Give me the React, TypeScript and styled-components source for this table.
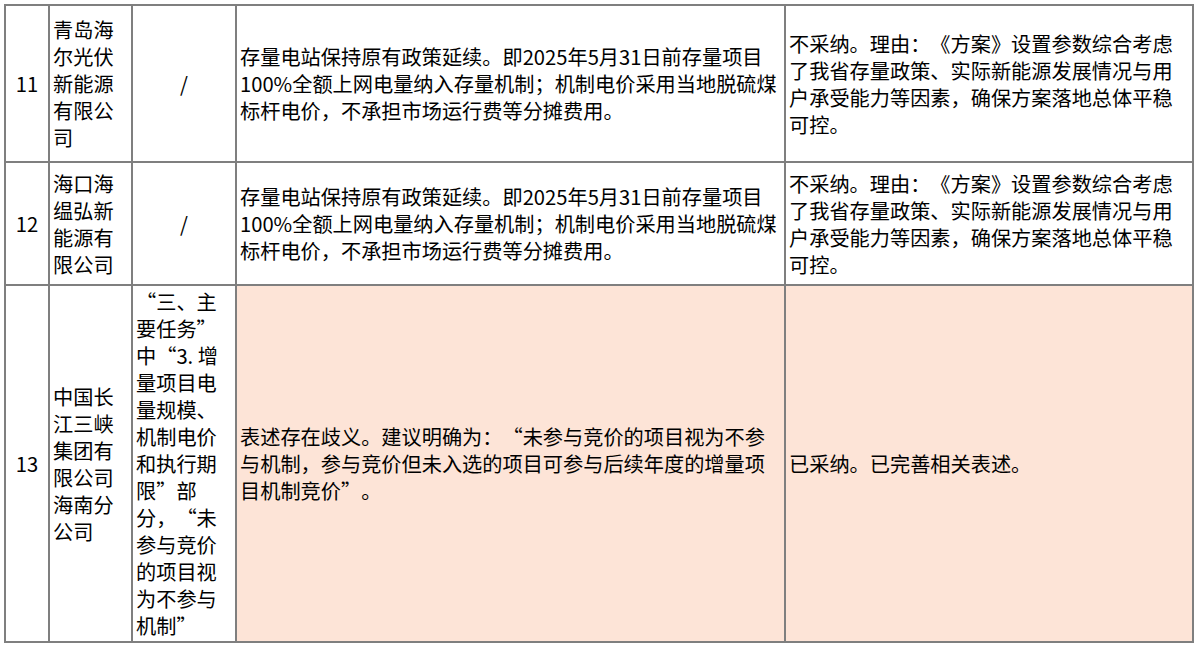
import styled, { createGlobalStyle } from "styled-components";

const GlobalStyle = createGlobalStyle`
  body {
    margin: 0;
    background: #ffffff;
    font-family: "Noto Sans CJK SC", "Noto Sans", sans-serif;
  }
`;

export const Page = styled.div`
  padding: 4px 0 0 4px;
`;

export const Table = styled.table`
  border-collapse: collapse;
  table-layout: fixed;
  width: 1188px;
  color: #000000;
  font-size: 20.2px;
  line-height: 27px;
  text-spacing-trim: space-all;
`;

export const Col = styled.col<{ $w: number }>`
  width: ${(p) => p.$w}px;
`;

export const Row = styled.tr<{ $h: number }>`
  height: ${(p) => p.$h}px;
`;

export const Cell = styled.td<{ $align?: string; $fill?: boolean }>`
  border: 2px solid #7f7f7f;
  padding: 1px 3px;
  vertical-align: middle;
  text-align: ${(p) => p.$align || "left"};
  background: ${(p) => (p.$fill ? "#fde4d7" : "#ffffff")};
`;

type Item = {
  no: string;
  unit: string;
  clause: string;
  clauseAlign: string;
  advice: string;
  reply: string;
  height: number;
  fill?: boolean;
};

const widths = [44, 83, 104, 549, 408];

// zero-width spaces give the browser a break point next to the curly quotes
const zw = "\u200B";

const rows: Item[] = [
  {
    no: "11",
    unit: "青岛海尔光伏新能源有限公司",
    clause: "/",
    clauseAlign: "center",
    advice:
      "存量电站保持原有政策延续。即2025年5月31日前存量项目100%全额上网电量纳入存量机制；机制电价采用当地脱硫煤标杆电价，不承担市场运行费等分摊费用。",
    reply:
      "不采纳。理由：《方案》设置参数综合考虑了我省存量政策、实际新能源发展情况与用户承受能力等因素，确保方案落地总体平稳可控。",
    height: 157,
  },
  {
    no: "12",
    unit: "海口海缊弘新能源有限公司",
    clause: "/",
    clauseAlign: "center",
    advice:
      "存量电站保持原有政策延续。即2025年5月31日前存量项目100%全额上网电量纳入存量机制；机制电价采用当地脱硫煤标杆电价，不承担市场运行费等分摊费用。",
    reply:
      "不采纳。理由：《方案》设置参数综合考虑了我省存量政策、实际新能源发展情况与用户承受能力等因素，确保方案落地总体平稳可控。",
    height: 123,
  },
  {
    no: "13",
    unit: "中国长江三峡集团有限公司海南分公司",
    clause: `“三、主要任务”${zw}中${zw}“3. 增量项目电量规模、机制电价和执行期限”${zw}部分，${zw}“未参与竞价的项目视为不参与机制”`,
    clauseAlign: "left",
    advice: `表述存在歧义。建议明确为：${zw}“未参与竞价的项目视为不参与机制，参与竞价但未入选的项目可参与后续年度的增量项目机制竞价”${zw}。`,
    reply: "已采纳。已完善相关表述。",
    height: 357,
    fill: true,
  },
];

export default function App() {
  return (
    <Page>
      <GlobalStyle />
      <Table lang="zh-CN">
        <colgroup>
          {widths.map((w, i) => (
            <Col key={i} $w={w} />
          ))}
        </colgroup>
        <tbody>
          {rows.map((r) => (
            <Row key={r.no} $h={r.height}>
              <Cell $align="center">{r.no}</Cell>
              <Cell>{r.unit}</Cell>
              <Cell $align={r.clauseAlign}>{r.clause}</Cell>
              <Cell $fill={r.fill}>{r.advice}</Cell>
              <Cell $fill={r.fill}>{r.reply}</Cell>
            </Row>
          ))}
        </tbody>
      </Table>
    </Page>
  );
}
